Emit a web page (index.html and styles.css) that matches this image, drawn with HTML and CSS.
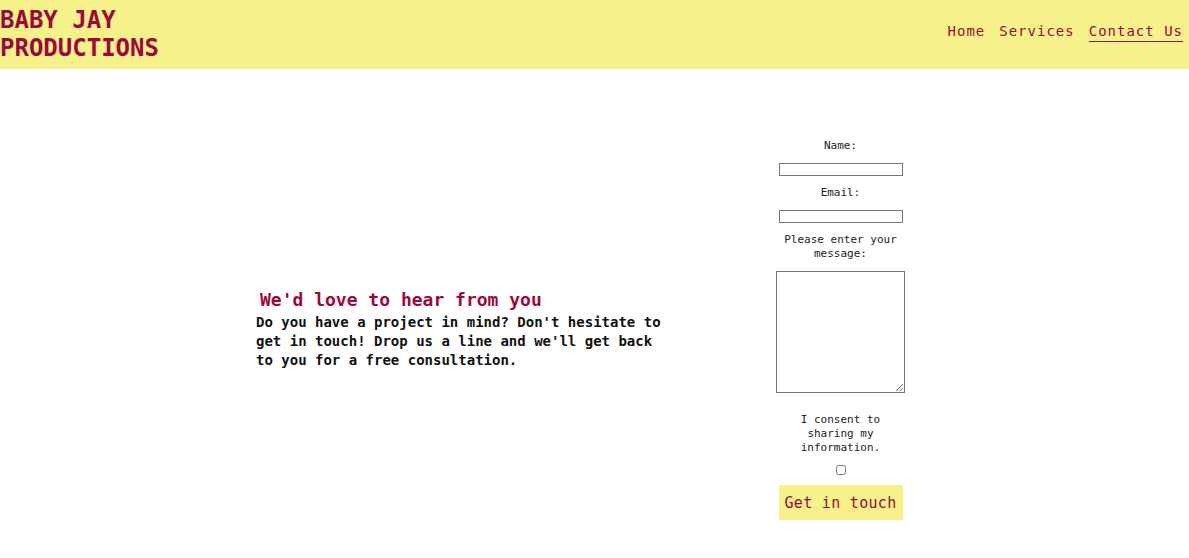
FILE: index.html
```html
<!DOCTYPE html>
<html lang="en">
<head>
<meta charset="utf-8">
<title>Contact Us - Baby Jay Productions</title>
<link rel="stylesheet" href="styles.css">
</head>
<body>
<header class="site-header">
  <h1 class="brand">BABY JAY<br>PRODUCTIONS</h1>
  <nav class="nav">
    <a class="nav-link" href="#">Home</a>
    <a class="nav-link" href="#">Services</a>
    <a class="nav-link active" href="#">Contact Us</a>
  </nav>
</header>
<main class="contact">
  <section class="intro">
    <h2 class="intro-title">We'd love to hear from you</h2>
    <p class="intro-text">Do you have a project in mind? Don't hesitate to get in touch! Drop us a line and we'll get back to you for a free consultation.</p>
  </section>
  <form class="form">
    <label class="label" for="name">Name:</label>
    <input class="input" id="name" type="text">
    <label class="label" for="email">Email:</label>
    <input class="input" id="email" type="email">
    <label class="label" for="msg">Please enter your message:</label>
    <textarea class="textarea" id="msg"></textarea>
    <label class="label consent" for="consent">I consent to sharing my information.</label>
    <input class="check" id="consent" type="checkbox">
    <button class="button" type="button">Get in touch</button>
  </form>
</main>
</body>
</html>
```
FILE: styles.css
```css
* { box-sizing: border-box; }
body {
  margin: 0;
  font-family: "DejaVu Sans Mono", "Liberation Mono", monospace;
  background: #fff;
  color: #111;
}
.site-header {
  display: flex;
  justify-content: space-between;
  align-items: flex-start;
  background: #f6f18a;
  height: 69px;
}
.brand {
  margin: 0;
  padding-top: 6px;
  font-size: 24px;
  line-height: 28px;
  font-weight: bold;
  color: #9b0a3a;
}
.nav {
  display: flex;
  gap: 14px;
  padding: 22px 6px 0 0;
}
.nav-link {
  color: #9b0a3a;
  text-decoration: none;
  font-size: 14px;
  line-height: 18px;
  letter-spacing: 1px;
  padding-bottom: 1px;
}
.nav-link.active {
  border-bottom: 1px solid #9b0a3a;
}
.contact {
  display: flex;
  align-items: center;
  padding: 70px 0 0 256px;
  gap: 110px;
}
.intro {
  width: 410px;
}
.intro-title {
  margin: 0 0 2px 4px;
  font-size: 18px;
  line-height: 22px;
  font-weight: bold;
  color: #9b0a3a;
}
.intro-text {
  margin: 0;
  font-size: 14px;
  line-height: 19px;
  font-weight: bold;
}
.form {
  width: 129px;
  display: flex;
  flex-direction: column;
  align-items: center;
  gap: 10px;
}
.label {
  font-size: 11px;
  line-height: 14px;
  text-align: center;
  color: #222;
}
.input {
  width: 124px;
  height: 13px;
  border: 1px solid #767676;
  padding: 0;
}
.textarea {
  width: 129px;
  height: 122px;
  border: 1px solid #767676;
  padding: 2px;
  margin: 0;
}
.consent {
  width: 100px;
  margin-top: 10px;
}
.check {
  width: 10px;
  height: 10px;
  margin: 0;
}
.button {
  width: 124px;
  height: 35px;
  border: none;
  background: #f6f18a;
  color: #9b0a3a;
  font-family: inherit;
  font-size: 15px;
  letter-spacing: 0.3px;
}
```
